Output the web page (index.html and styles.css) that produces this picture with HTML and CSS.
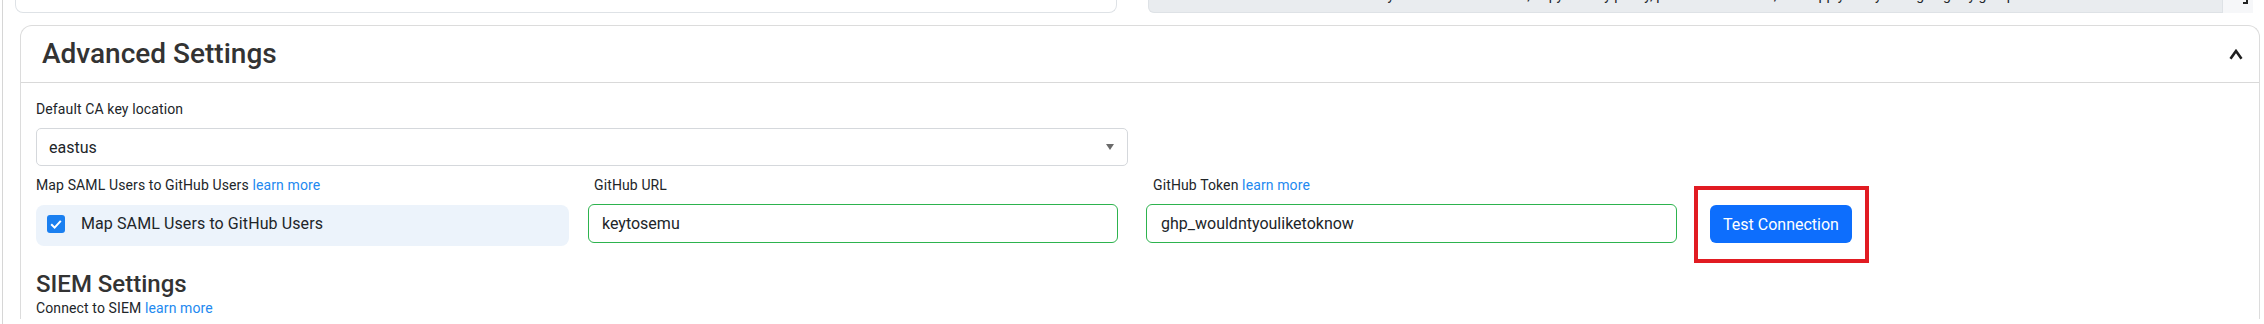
FILE: index.html
```html
<!DOCTYPE html>
<html lang="en">
<head>
<meta charset="utf-8">
<title>Advanced Settings</title>
<link rel="stylesheet" href="styles.css">
</head>
<body>
<div class="frame">
  <div class="top-row">
    <div class="prev-card"></div>
    <div class="code-box"><span class="code-text">Run this in your Azure Cloud Shell, copy the key policy, paste it in the vault, then apply it to your signing key group.</span></div>
    <div class="copy-box"><span class="copy-glyph"></span></div>
  </div>

  <section class="card">
    <header class="card-header">
      <h2 class="card-title">Advanced Settings</h2>
      <svg class="chevron" width="14" height="11" viewBox="0 0 14 11" aria-hidden="true">
        <path d="M1.5 9.8 L7 2 L12.5 9.8" fill="none" stroke="#1f1f1f" stroke-width="2.6"/>
      </svg>
    </header>

    <div class="card-body">
      <div class="field-label">Default CA key location</div>
      <div class="select">
        <span class="select-value">eastus</span>
        <span class="caret"></span>
      </div>

      <div class="row">
        <div class="col col-map">
          <div class="field-label">Map SAML Users to GitHub Users <a class="link" href="#">learn more</a></div>
          <div class="check-box">
            <span class="checkbox">
              <svg width="18" height="18" viewBox="0 0 18 18" aria-hidden="true">
                <path d="M4.2 9.3 L7.6 12.6 L13.8 5.8" fill="none" stroke="#fff" stroke-width="2"/>
              </svg>
            </span>
            <span class="check-label">Map SAML Users to GitHub Users</span>
          </div>
        </div>

        <div class="col col-url">
          <div class="field-label">GitHub URL</div>
          <div class="input">keytosemu</div>
        </div>

        <div class="col col-token">
          <div class="field-label">GitHub Token <a class="link" href="#">learn more</a></div>
          <div class="input">ghp_wouldntyouliketoknow</div>
        </div>

        <div class="btn-wrap">
          <button class="btn" type="button">Test Connection</button>
          <span class="highlight"></span>
        </div>
      </div>

      <h3 class="section-title">SIEM Settings</h3>
      <div class="section-sub">Connect to SIEM <a class="link" href="#">learn more</a></div>
    </div>
  </section>
</div>
</body>
</html>
```

FILE: styles.css
```css
* { box-sizing: border-box; }

html, body {
  margin: 0;
  padding: 0;
  background: #fff;
  overflow: hidden;
}

body {
  font-family: Roboto, "Liberation Sans", Arial, sans-serif;
  color: #212529;
  width: 2264px;
  height: 324px;
}

.frame {
  margin-left: 2px;
  border-left: 1px solid #d6d6d6;
  height: 324px;
}

/* top strip (bottom of previous section) */
.top-row {
  display: flex;
  height: 13px;
}

.prev-card {
  margin-left: 12px;
  width: 1102px;
  height: 13px;
  border: 1px solid #dee2e6;
  border-top: none;
  border-radius: 0 0 8px 8px;
}

.code-box {
  margin-left: 31px;
  width: 1075px;
  height: 13px;
  background: #e9ecef;
  border: 1px solid #dee2e6;
  border-top: none;
  border-radius: 0 0 0 6px;
  overflow: hidden;
}

.code-text {
  display: block;
  margin-top: -13px;
  padding-left: 170px;
  font-size: 14px;
  line-height: 16px;
  white-space: nowrap;
  color: #212529;
}

.copy-box {
  width: 30px;
  height: 13px;
  background: #f6f7f9;
}

.copy-glyph {
  display: block;
  margin: 0 0 0 20px;
  width: 5px;
  height: 4px;
  border-bottom: 2px solid #222;
  border-right: 2px solid #222;
}

/* card */
.card {
  margin: 12px 4px 0 17px;
  border: 1px solid #dcdcdc;
  border-bottom: none;
  border-radius: 12px 12px 0 0;
}

.card-header {
  display: flex;
  align-items: center;
  justify-content: space-between;
  height: 57px;
  padding: 0 16px 0 21px;
  border-bottom: 1px solid #d9d9d9;
}

.card-title {
  margin: 0;
  font-size: 28px;
  font-weight: 500;
  line-height: 28px;
  color: #333;
}

.chevron {
  display: block;
}

.card-body {
  padding: 16px 16px 0 15px;
}

.field-label {
  font-size: 14px;
  line-height: 21px;
  letter-spacing: 0.12px;
  color: #212529;
  white-space: nowrap;
}

.link {
  color: #2389f0;
  text-decoration: none;
}

.select {
  margin-top: 8px;
  width: 1092px;
  height: 38px;
  display: flex;
  align-items: center;
  justify-content: space-between;
  padding: 0 13px 0 12px;
  border: 1px solid #d5d8dc;
  border-radius: 5px;
  font-size: 16px;
  color: #212529;
}

.caret {
  width: 0;
  height: 0;
  border-left: 4px solid transparent;
  border-right: 4px solid transparent;
  border-top: 6px solid #6b6b6b;
}

.row {
  display: flex;
  align-items: flex-start;
  margin-top: 9px;
}

.col-map { width: 533px; }
.col-url { width: 530px; margin-left: 19px; }
.col-token { width: 531px; margin-left: 28px; }

.col-url .field-label { padding-left: 6px; }
.col-token .field-label { padding-left: 7px; }

.check-box {
  margin-top: 9px;
  height: 41px;
  display: flex;
  align-items: flex-start;
  padding: 10px 0 0 11px;
  background: #ecf3fb;
  border-radius: 8px;
}

.checkbox {
  width: 18px;
  height: 18px;
  border-radius: 3px;
  background: #1a7ff0;
  display: block;
}

.checkbox svg { display: block; }

.check-label {
  margin-left: 16px;
  font-size: 16px;
  line-height: 18px;
  letter-spacing: 0.1px;
  color: #212529;
  white-space: nowrap;
}

.input {
  margin-top: 8px;
  height: 39px;
  display: flex;
  align-items: center;
  padding-left: 13px;
  border: 1px solid #2db34e;
  border-radius: 6px;
  font-size: 16px;
  color: #212529;
}

.col-token .input { padding-left: 14px; }

.btn-wrap {
  position: relative;
  margin-left: 33px;
  margin-top: 30px;
}

.btn {
  display: block;
  width: 142px;
  height: 38px;
  border: none;
  border-radius: 6px;
  background: #0d6efd;
  color: #fff;
  font-family: Roboto, "Liberation Sans", Arial, sans-serif;
  font-size: 16px;
  padding: 0;
}

.highlight {
  position: absolute;
  top: -19px;
  left: -16px;
  right: -17px;
  bottom: -20px;
  border: 4px solid #e11b22;
  pointer-events: none;
}

.section-title {
  margin: 24px 0 0 0;
  font-size: 24px;
  font-weight: 500;
  line-height: 28px;
  color: #333;
}

.section-sub {
  font-size: 14px;
  line-height: 21px;
  letter-spacing: 0.12px;
  color: #212529;
}
```
